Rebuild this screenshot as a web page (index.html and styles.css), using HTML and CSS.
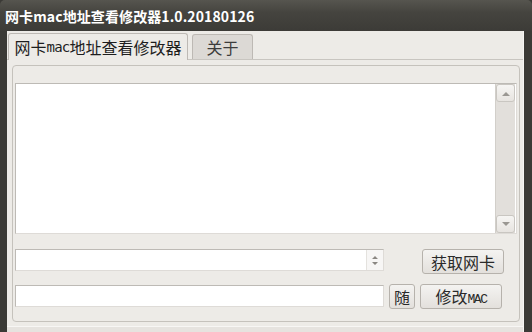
FILE: index.html
```html
<!DOCTYPE html>
<html>
<head>
<meta charset="utf-8">
<link rel="stylesheet" href="styles.css">
</head>
<body>
<div class="win">
  <div class="title">网卡mac地址查看修改器1.0.20180126</div>
  <div class="client">
    <div class="tabs">
      <div class="tab active">网卡<span class="mono">mac</span>地址查看修改器</div>
      <div class="tab">关于</div>
    </div>
    <div class="panel">
      <div class="textarea">
        <div class="text"></div>
        <div class="vscroll">
          <div class="sbtn"><svg width="8" height="5" viewBox="0 0 8 5"><path d="M0 5 L4 1 L8 5 Z" fill="#9a9792"/></svg></div>
          <div class="trough"></div>
          <div class="sbtn"><svg width="8" height="5" viewBox="0 0 8 5"><path d="M0 0 L4 4 L8 0 Z" fill="#9a9792"/></svg></div>
        </div>
      </div>
      <div class="row row1">
        <div class="combo">
          <div class="combo-field"></div>
          <div class="spin"><svg width="8" height="11" viewBox="0 0 8 11"><path d="M1 4 L4 1 L7 4 Z M1 7 L4 10 L7 7 Z" fill="#8a8782"/></svg></div>
        </div>
        <div class="fill"></div>
        <button class="btn big">获取网卡</button>
      </div>
      <div class="row row2">
        <div class="input"></div>
        <button class="btn small">随</button>
        <button class="btn big">修改<span class="mac">MAC</span></button>
      </div>
    </div>
    <div class="bottom"></div>
  </div>
</div>
</body>
</html>
```

FILE: styles.css
```css
html, body {
  margin: 0;
  padding: 0;
}
body {
  width: 532px;
  height: 332px;
  overflow: hidden;
  background: #3b3a36;
  font-family: "Noto Sans CJK SC", "DejaVu Sans", sans-serif;
}
.win {
  display: flex;
  flex-direction: column;
  height: 332px;
}
.title {
  height: 31px;
  flex: none;
  display: flex;
  align-items: center;
  padding-left: 5px;
  color: #ffffff;
  font-weight: bold;
  font-size: 14px;
  letter-spacing: 0.1px;
  background: linear-gradient(#56554f 0, #45443f 40%, #3c3b37 100%);
  border-radius: 5px 5px 0 0;
}
.client {
  flex: 1;
  display: flex;
  flex-direction: column;
  margin: 0 8px 0 7px;
  background: #edebe7;
  border-right: 1px solid #f6f5f3;
}
.tabs {
  display: flex;
  align-items: flex-end;
  height: 29px;
  padding: 2px 0 0 1px;
  border-bottom: 1px solid #c8c5c0;
  flex: none;
  box-sizing: border-box;
}
.tab {
  height: 25px;
  box-sizing: border-box;
  display: flex;
  align-items: center;
  justify-content: center;
  font-size: 16px;
  color: #3c3c3c;
  border: 1px solid #bdb9b4;
  border-bottom: none;
  border-radius: 3px 3px 0 0;
  background: #dcd9d5;
  margin-left: 4px;
  width: 61px;
}
.tab.active {
  height: 27px;
  width: 180px;
  margin-left: 0;
  background: #edebe7;
  margin-bottom: -1px;
  color: #1e1e1e;
}
.mono {
  font-family: "DejaVu Sans Mono", monospace;
  font-size: 14px;
  letter-spacing: -0.8px;
}
.panel {
  margin: 5px 3px 0 5px;
  height: 257px;
  box-sizing: border-box;
  border: 1px solid #c5c2bc;
  border-radius: 4px;
  padding: 17px 2px 0 2px;
  display: flex;
  flex-direction: column;
  flex: none;
}
.textarea {
  height: 151px;
  box-sizing: border-box;
  border: 1px solid #bdbab5;
  border-right-color: #dedbd7;
  border-bottom-color: #dedbd7;
  background: #ffffff;
  display: flex;
}
.text {
  flex: 1;
}
.vscroll {
  width: 19px;
  margin-right: 1px;
  display: flex;
  flex-direction: column;
  background: #e2dfdb;
  border-left: 1px solid #d2cfca;
}
.sbtn {
  height: 18px;
  box-sizing: border-box;
  border: 1px solid #c9c6c1;
  border-radius: 3px;
  background: linear-gradient(#f6f5f3, #e7e4e0);
  display: flex;
  align-items: center;
  justify-content: center;
}
.trough {
  flex: 1;
}
.row {
  display: flex;
  align-items: flex-start;
}
.row1 {
  margin-top: 15px;
  padding-right: 13px;
}
.row2 {
  margin-top: 10px;
  padding-right: 13px;
}
.combo {
  width: 369px;
  height: 22px;
  box-sizing: border-box;
  border: 1px solid #bdbab5;
  border-right-color: #dedbd7;
  border-bottom-color: #dedbd7;
  background: #ffffff;
  display: flex;
}
.combo-field {
  flex: 1;
}
.spin {
  width: 16px;
  border-left: 1px solid #e4e2de;
  background: #f7f6f5;
  display: flex;
  align-items: center;
  justify-content: center;
}
.fill {
  flex: 1;
}
.input {
  width: 369px;
  height: 22px;
  box-sizing: border-box;
  border: 1px solid #bdbab5;
  border-right-color: #dedbd7;
  border-bottom-color: #dedbd7;
  background: #ffffff;
  margin-top: 1px;
}
.btn {
  height: 25px;
  box-sizing: border-box;
  border: 1px solid #b6b2ac;
  border-radius: 3px;
  background: linear-gradient(#f4f3f1, #e3e0dc);
  font-family: "Noto Sans CJK SC", sans-serif;
  font-size: 16px;
  color: #2a2a2a;
  padding: 0;
  text-align: center;
  line-height: 22px;
  white-space: nowrap;
}
.btn.big {
  width: 82px;
}
.btn.small {
  width: 26px;
  margin-left: 5px;
  margin-right: 5px;
}
.mac {
  font-family: "Liberation Mono", monospace;
  font-size: 13px;
  letter-spacing: -1.5px;
  vertical-align: baseline;
}
.bottom {
  flex: 1;
  border-top: 4px solid #edebe7;
  background: linear-gradient(#f7f6f4 0, #f7f6f4 1px, #e6e3df 1px);
}
```
